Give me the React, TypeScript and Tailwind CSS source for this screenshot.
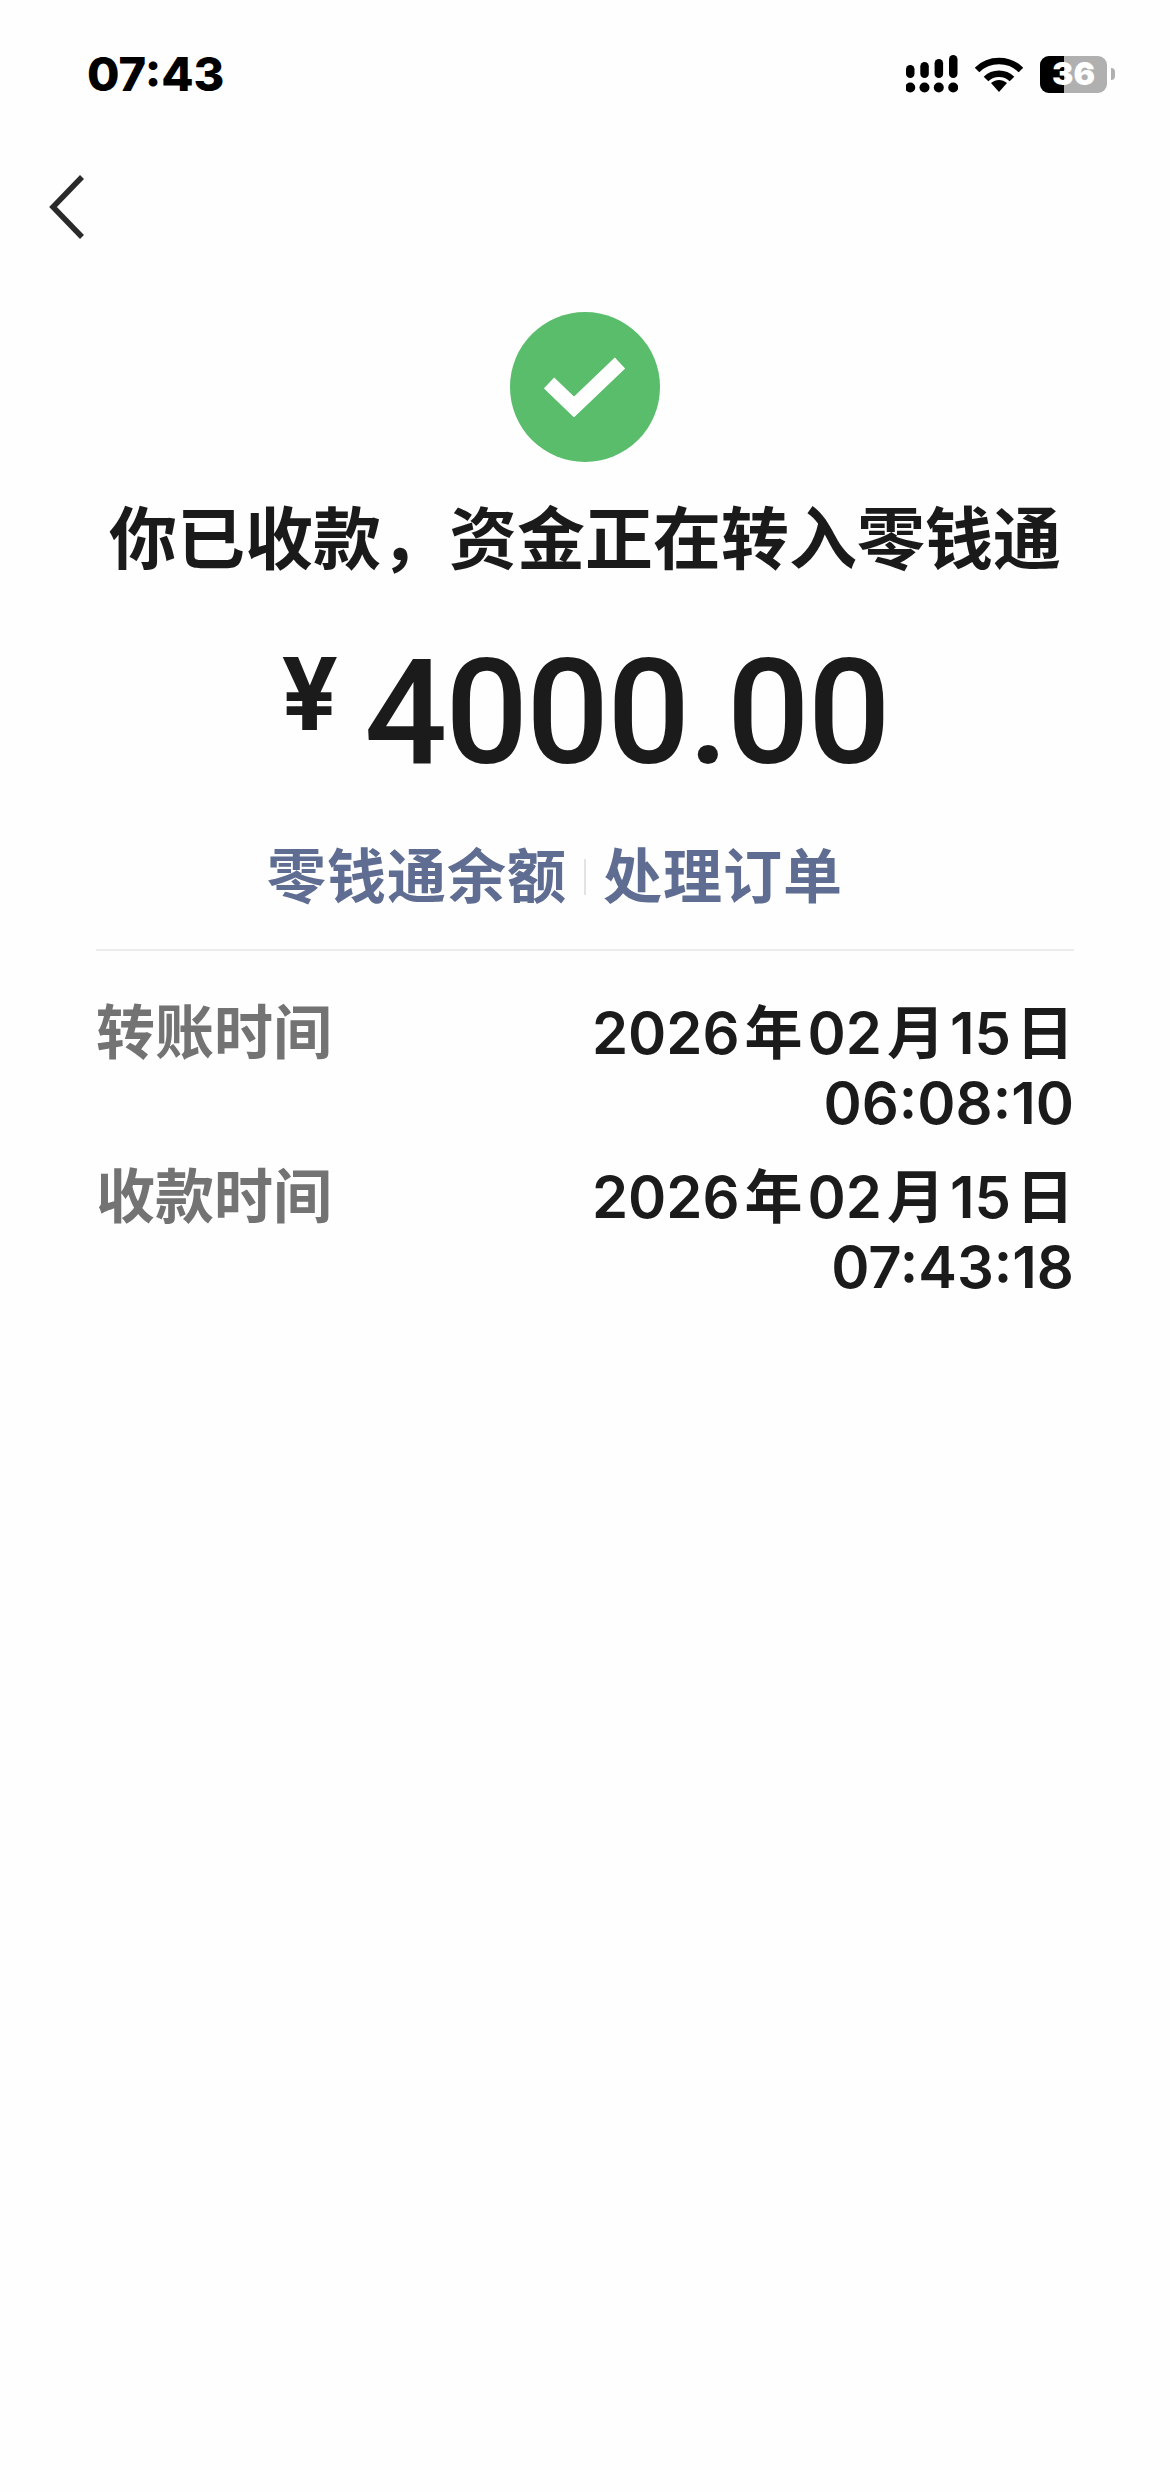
import React from 'react';

const cjk = "font-['Inter','Noto_Sans_CJK_SC',sans-serif]";

const SignalIcon = () => (
  <svg width="52" height="38" viewBox="0 0 52 38" fill="#000">
    <rect x="0" y="10" width="8.5" height="13" rx="4.25" />
    <rect x="14.3" y="7" width="8.5" height="16" rx="4.25" />
    <rect x="28.6" y="4" width="8.5" height="19" rx="4.25" />
    <rect x="43" y="0" width="8.5" height="23" rx="4.25" />
    <circle cx="4.25" cy="32.5" r="5" />
    <circle cx="18.5" cy="32.5" r="5" />
    <circle cx="32.8" cy="32.5" r="5" />
    <circle cx="47.2" cy="32.5" r="5" />
  </svg>
);

const WifiIcon = () => (
  <svg width="48" height="36" viewBox="0 0 48 36" fill="none" stroke="#000" strokeWidth="6.5">
    <path d="M2 14 C14 2 34 2 46 14" />
    <path d="M11 23 C18 16 30 16 37 23" />
    <path d="M16 27 L24 36 L32 27 C27 23 21 23 16 27 Z" fill="#000" stroke="none" />
  </svg>
);

const BatteryIcon = () => (
  <div className="flex items-center">
    <div className="relative flex h-[37px] w-[67px] overflow-hidden rounded-[9px] bg-[#b0b0b0]">
      <div className="w-[24px] bg-black" />
      <span className="absolute inset-0 flex items-center justify-center font-['Inter',sans-serif] text-[32px] font-black leading-none text-white">
        36
      </span>
    </div>
    <div className="ml-[4px] h-[12px] w-[4px] rounded-r-full bg-[#b0b0b0]" />
  </div>
);

const DetailRow = ({ label, date, time }: { label: string; date: string[]; time: string }) => (
  <div className="flex items-start justify-between">
    <div className="text-[59px] font-bold leading-[70px] text-[#737373]">{label}</div>
    <div className="text-right text-[58px] font-semibold leading-[70px] text-[#1b1b1b]">
      <div className="flex justify-end gap-[5px]">
        {date.map((part) => (
          <span key={part}>{part}</span>
        ))}
      </div>
      <div>{time}</div>
    </div>
  </div>
);

export default function App() {
  return (
    <div className={`flex h-[2492px] w-[1170px] flex-col overflow-hidden bg-[#fefefe] ${cjk}`}>
      {/* status bar */}
      <div className="flex items-center justify-between pl-[87px] pr-[55px] pt-[50px]">
        <span className="font-['Inter',sans-serif] text-[47px] font-extrabold leading-[48px] text-black">07:43</span>
        <div className="flex items-center gap-[17px]">
          <SignalIcon />
          <WifiIcon />
          <BatteryIcon />
        </div>
      </div>

      {/* back */}
      <div className="pl-[49px] pt-[76px]">
        <svg width="36" height="66" viewBox="0 0 36 66" fill="none" stroke="#2a2a2a" strokeWidth="5.5">
          <path d="M33 3 L4 33 L33 63" />
        </svg>
      </div>

      {/* result */}
      <div className="flex flex-col items-center">
        <div className="mt-[72px] flex h-[150px] w-[150px] items-center justify-center rounded-full bg-[#59bd6b]">
          <svg width="82" height="60" viewBox="0 0 82 60" fill="none" stroke="#fff" strokeWidth="15">
            <path d="M5 26 L30 50 L76 6" />
          </svg>
        </div>
        <h1 className="mt-[37px] text-[68px] font-bold leading-[80px] text-[#1a1a1a]">你已收款，资金正在转入零钱通</h1>
        <div className="mt-[60px] flex items-start text-[#1b1b1b]">
          <span className="text-[100px] font-bold leading-[110px]">¥</span>
          <span className="ml-[26px] font-['Roboto',sans-serif] text-[146px] font-medium leading-[150px] tracking-[-2px]">4000.00</span>
        </div>
        <div className="ml-[267px] mt-[52px] flex items-center self-start text-[59px] font-bold leading-[72px] tracking-[1px] text-[#5f6d92]">
          <span>零钱通余额</span>
          <span className="mx-[17px] h-[36px] w-[2px] bg-[#e3e3e3]" />
          <span>处理订单</span>
        </div>
      </div>

      {/* details */}
      <div className="mx-[96px] mt-[36px] flex flex-col gap-[24px] border-t-2 border-[#ececec] pt-[47px]">
        <DetailRow label="转账时间" date={['2026', '年', '02', '月', '15', '日']} time="06:08:10" />
        <DetailRow label="收款时间" date={['2026', '年', '02', '月', '15', '日']} time="07:43:18" />
      </div>
    </div>
  );
}
